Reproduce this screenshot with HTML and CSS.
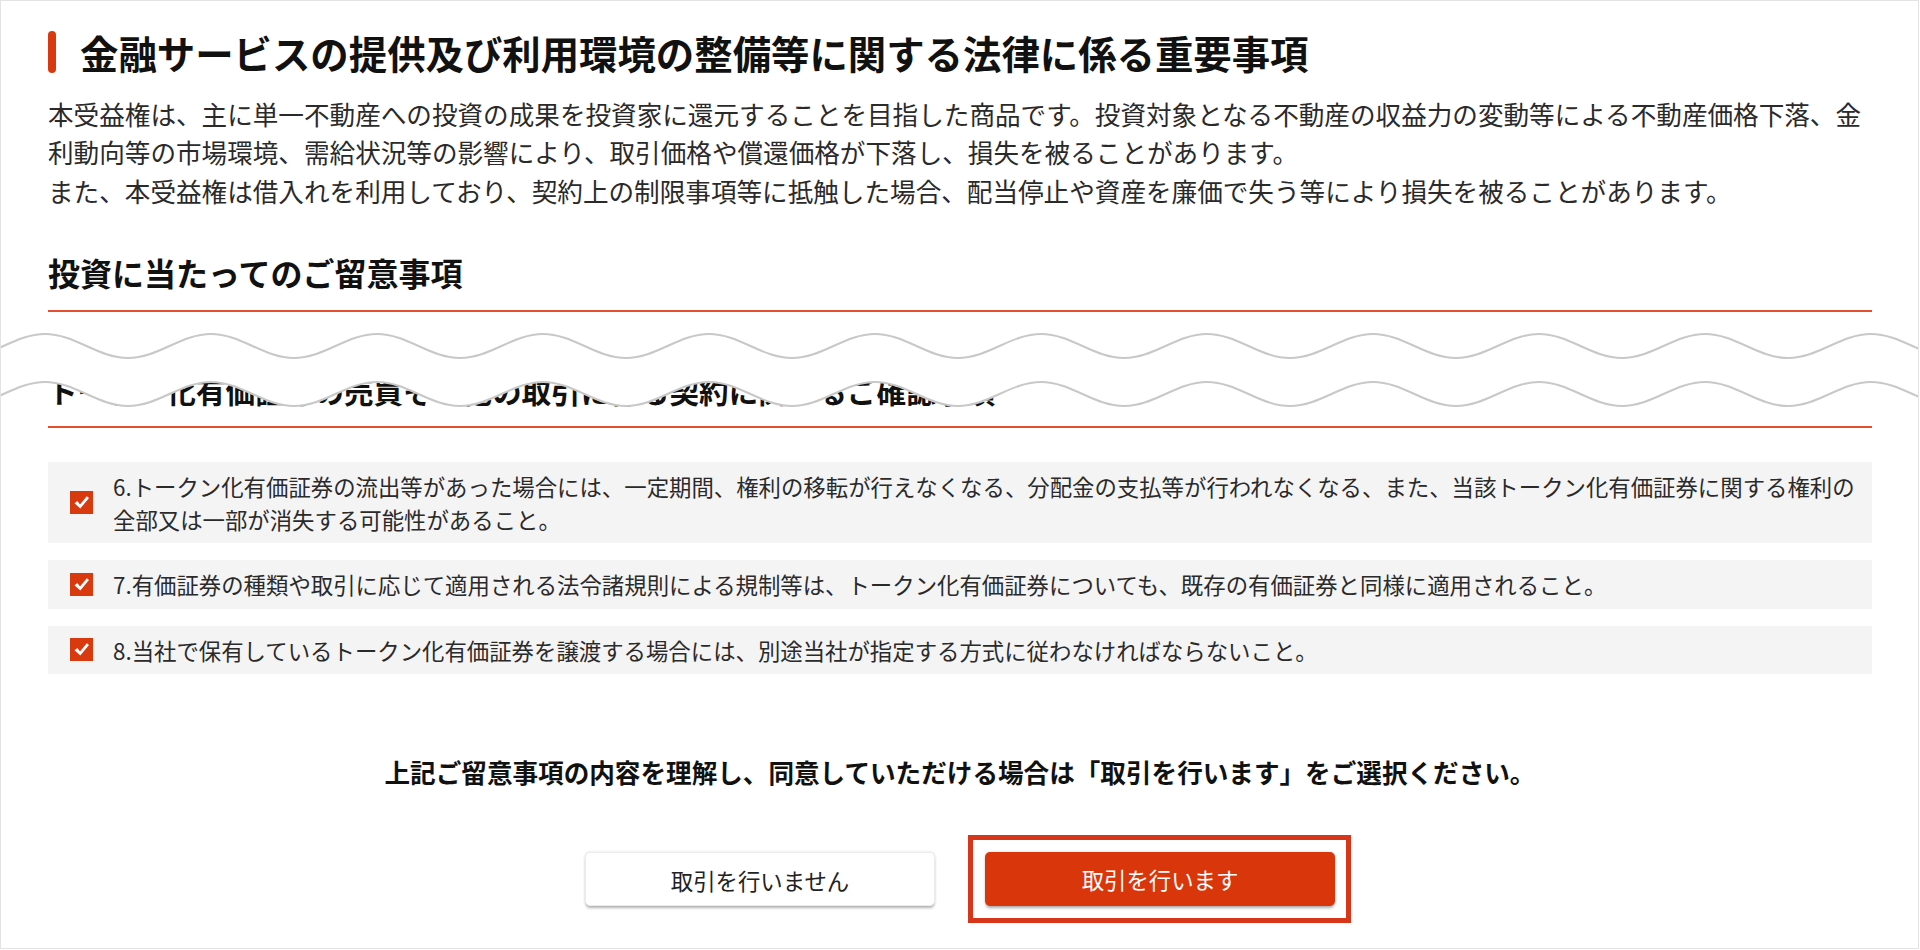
FILE: index.html
```html
<!DOCTYPE html>
<html lang="ja">
<head>
<meta charset="utf-8">
<title>重要事項</title>
<link rel="stylesheet" href="styles.css">
</head>
<body>
<div class="page">
  <div class="content">
    <h2 class="title">金融サービスの提供及び利用環境の整備等に関する法律に係る重要事項</h2>
    <p class="lead">本受益権は、主に単一不動産への投資の成果を投資家に還元することを目指した商品です。投資対象となる不動産の収益力の変動等による不動産価格下落、金利動向等の市場環境、需給状況等の影響により、取引価格や償還価格が下落し、損失を被ることがあります。<br>また、本受益権は借入れを利用しており、契約上の制限事項等に抵触した場合、配当停止や資産を廉価で失う等により損失を被ることがあります。</p>

    <h3 class="sub">投資に当たってのご留意事項</h3>
    <h3 class="sub sub-second">トークン化有価証券の売買その他の取引に係る契約に関するご確認事項</h3>

    <ul class="checks">
      <li class="check-item">
        <span class="box"><svg viewBox="0 0 23 23" width="23" height="23"><rect width="23" height="23" fill="#d9390f"/><path d="M4.5 12.2 L7.4 10 L10 13.4 L16.8 5.2 L19 7 L10.3 17.6 Z" fill="#fff"/></svg></span>
        <span class="check-text">6.トークン化有価証券の流出等があった場合には、一定期間、権利の移転が行えなくなる、分配金の支払等が行われなくなる、また、当該トークン化有価証券に関する権利の全部又は一部が消失する可能性があること。</span>
      </li>
      <li class="check-item">
        <span class="box"><svg viewBox="0 0 23 23" width="23" height="23"><rect width="23" height="23" fill="#d9390f"/><path d="M4.5 12.2 L7.4 10 L10 13.4 L16.8 5.2 L19 7 L10.3 17.6 Z" fill="#fff"/></svg></span>
        <span class="check-text">7.有価証券の種類や取引に応じて適用される法令諸規則による規制等は、トークン化有価証券についても、既存の有価証券と同様に適用されること。</span>
      </li>
      <li class="check-item">
        <span class="box"><svg viewBox="0 0 23 23" width="23" height="23"><rect width="23" height="23" fill="#d9390f"/><path d="M4.5 12.2 L7.4 10 L10 13.4 L16.8 5.2 L19 7 L10.3 17.6 Z" fill="#fff"/></svg></span>
        <span class="check-text">8.当社で保有しているトークン化有価証券を譲渡する場合には、別途当社が指定する方式に従わなければならないこと。</span>
      </li>
    </ul>

    <p class="confirm">上記ご留意事項の内容を理解し、同意していただける場合は「取引を行います」をご選択ください。</p>

    <div class="actions">
      <button class="btn btn-cancel" type="button">取引を行いません</button>
      <span class="highlight"><button class="btn btn-primary" type="button">取引を行います</button></span>
    </div>
  </div>

  <svg class="cut" viewBox="0 0 1920 450" width="1920" height="450" aria-hidden="true">
    <path fill="#fff" d="M-121 334 c30.2 0 52.8 24 83 24 s52.8 -24 83 -24 s52.8 24 83 24 s52.8 -24 83 -24 s52.8 24 83 24 s52.8 -24 83 -24 s52.8 24 83 24 s52.8 -24 83 -24 s52.8 24 83 24 s52.8 -24 83 -24 s52.8 24 83 24 s52.8 -24 83 -24 s52.8 24 83 24 s52.8 -24 83 -24 s52.8 24 83 24 s52.8 -24 83 -24 s52.8 24 83 24 s52.8 -24 83 -24 s52.8 24 83 24 s52.8 -24 83 -24 s52.8 24 83 24 s52.8 -24 83 -24 s52.8 24 83 24 s52.8 -24 83 -24 s52.8 24 83 24 s52.8 -24 83 -24 L2037 382 c-30.2 0 -52.8 24 -83 24 s-52.8 -24 -83 -24 s-52.8 24 -83 24 s-52.8 -24 -83 -24 s-52.8 24 -83 24 s-52.8 -24 -83 -24 s-52.8 24 -83 24 s-52.8 -24 -83 -24 s-52.8 24 -83 24 s-52.8 -24 -83 -24 s-52.8 24 -83 24 s-52.8 -24 -83 -24 s-52.8 24 -83 24 s-52.8 -24 -83 -24 s-52.8 24 -83 24 s-52.8 -24 -83 -24 s-52.8 24 -83 24 s-52.8 -24 -83 -24 s-52.8 24 -83 24 s-52.8 -24 -83 -24 s-52.8 24 -83 24 s-52.8 -24 -83 -24 s-52.8 24 -83 24 s-52.8 -24 -83 -24 s-52.8 24 -83 24 s-52.8 -24 -83 -24 Z"/>
    <path class="wave" d="M-121 334 c30.2 0 52.8 24 83 24 s52.8 -24 83 -24 s52.8 24 83 24 s52.8 -24 83 -24 s52.8 24 83 24 s52.8 -24 83 -24 s52.8 24 83 24 s52.8 -24 83 -24 s52.8 24 83 24 s52.8 -24 83 -24 s52.8 24 83 24 s52.8 -24 83 -24 s52.8 24 83 24 s52.8 -24 83 -24 s52.8 24 83 24 s52.8 -24 83 -24 s52.8 24 83 24 s52.8 -24 83 -24 s52.8 24 83 24 s52.8 -24 83 -24 s52.8 24 83 24 s52.8 -24 83 -24 s52.8 24 83 24 s52.8 -24 83 -24 s52.8 24 83 24 s52.8 -24 83 -24"/>
    <path class="wave" d="M-121 382 c30.2 0 52.8 24 83 24 s52.8 -24 83 -24 s52.8 24 83 24 s52.8 -24 83 -24 s52.8 24 83 24 s52.8 -24 83 -24 s52.8 24 83 24 s52.8 -24 83 -24 s52.8 24 83 24 s52.8 -24 83 -24 s52.8 24 83 24 s52.8 -24 83 -24 s52.8 24 83 24 s52.8 -24 83 -24 s52.8 24 83 24 s52.8 -24 83 -24 s52.8 24 83 24 s52.8 -24 83 -24 s52.8 24 83 24 s52.8 -24 83 -24 s52.8 24 83 24 s52.8 -24 83 -24 s52.8 24 83 24 s52.8 -24 83 -24 s52.8 24 83 24 s52.8 -24 83 -24"/>
  </svg>
</div>
</body>
</html>
```
FILE: styles.css
```css
* {
  box-sizing: border-box;
}

html,
body {
  margin: 0;
  padding: 0;
  background: #fff;
}

body {
  font-family: "Noto Sans CJK JP", "Noto Sans", sans-serif;
  color: #222;
}

.page {
  position: relative;
  width: 1919px;
  height: 949px;
  border: 1px solid #e3e3e3;
  overflow: hidden;
}

.content {
  width: 1824px;
  margin-left: 47px;
  padding-top: 30px;
}

.title {
  display: flex;
  align-items: center;
  gap: 24px;
  margin: 0;
  font-size: 38.4px;
  line-height: 42px;
  font-weight: 700;
  color: #111;
}

.title::before {
  content: "";
  flex: none;
  width: 8px;
  height: 42px;
  border-radius: 4px;
  background: #d9390f;
}

.lead {
  margin: 22px 0 0;
  font-size: 25.6px;
  line-height: 38.4px;
  color: #2a2a2a;
}

.sub {
  margin: 38px 0 0;
  padding-bottom: 14px;
  border-bottom: 2px solid #e4502e;
  font-size: 32px;
  line-height: 48px;
  font-weight: 700;
  color: #111;
}

.sub-second {
  margin-top: 57px;
  padding-bottom: 13px;
  font-size: 29.6px;
  line-height: 44px;
  white-space: nowrap;
}

.checks {
  list-style: none;
  margin: 34px 0 0;
  padding: 0;
  display: flex;
  flex-direction: column;
  gap: 17px;
}

.check-item {
  display: flex;
  align-items: center;
  gap: 20px;
  padding: 8px 10px 8px 22px;
  background: #f4f4f4;
  font-size: 22.4px;
  line-height: 32.5px;
  color: #2a2a2a;
}

.box {
  flex: none;
  display: block;
  width: 23px;
  height: 23px;
}

.box svg {
  display: block;
}

.check-text {
  flex: 1;
}

.confirm {
  margin: 79px 0 0;
  text-align: center;
  font-size: 25.6px;
  line-height: 38.4px;
  font-weight: 700;
  color: #111;
}

.actions {
  display: flex;
  justify-content: center;
  align-items: center;
  gap: 50px;
  margin-top: 60px;
}

.btn {
  display: block;
  width: 350px;
  height: 54px;
  padding: 0;
  border-radius: 5px;
  font-family: "Noto Sans CJK JP", "Noto Sans", sans-serif;
  font-size: 22.4px;
  line-height: 54px;
  cursor: pointer;
}

.btn-cancel {
  background: #fff;
  color: #222;
  border: 1px solid #ececec;
  box-shadow: 0 3px 3px -1px rgba(0, 0, 0, 0.28), 0 0 3px rgba(0, 0, 0, 0.12);
}

.btn-primary {
  background: #d9360b;
  color: #fff;
  border: none;
  box-shadow: 0 3px 3px -1px rgba(0, 0, 0, 0.3), 0 0 3px rgba(0, 0, 0, 0.12);
}

.highlight {
  position: relative;
  display: block;
}

.highlight::after {
  content: "";
  position: absolute;
  top: -17px;
  right: -16px;
  bottom: -17px;
  left: -17px;
  border: 5px solid #d8361a;
  pointer-events: none;
}

.cut {
  position: absolute;
  top: -1px;
  left: -1px;
  pointer-events: none;
}

.cut .wave {
  fill: none;
  stroke: #c8c8c8;
  stroke-width: 2;
}
```
